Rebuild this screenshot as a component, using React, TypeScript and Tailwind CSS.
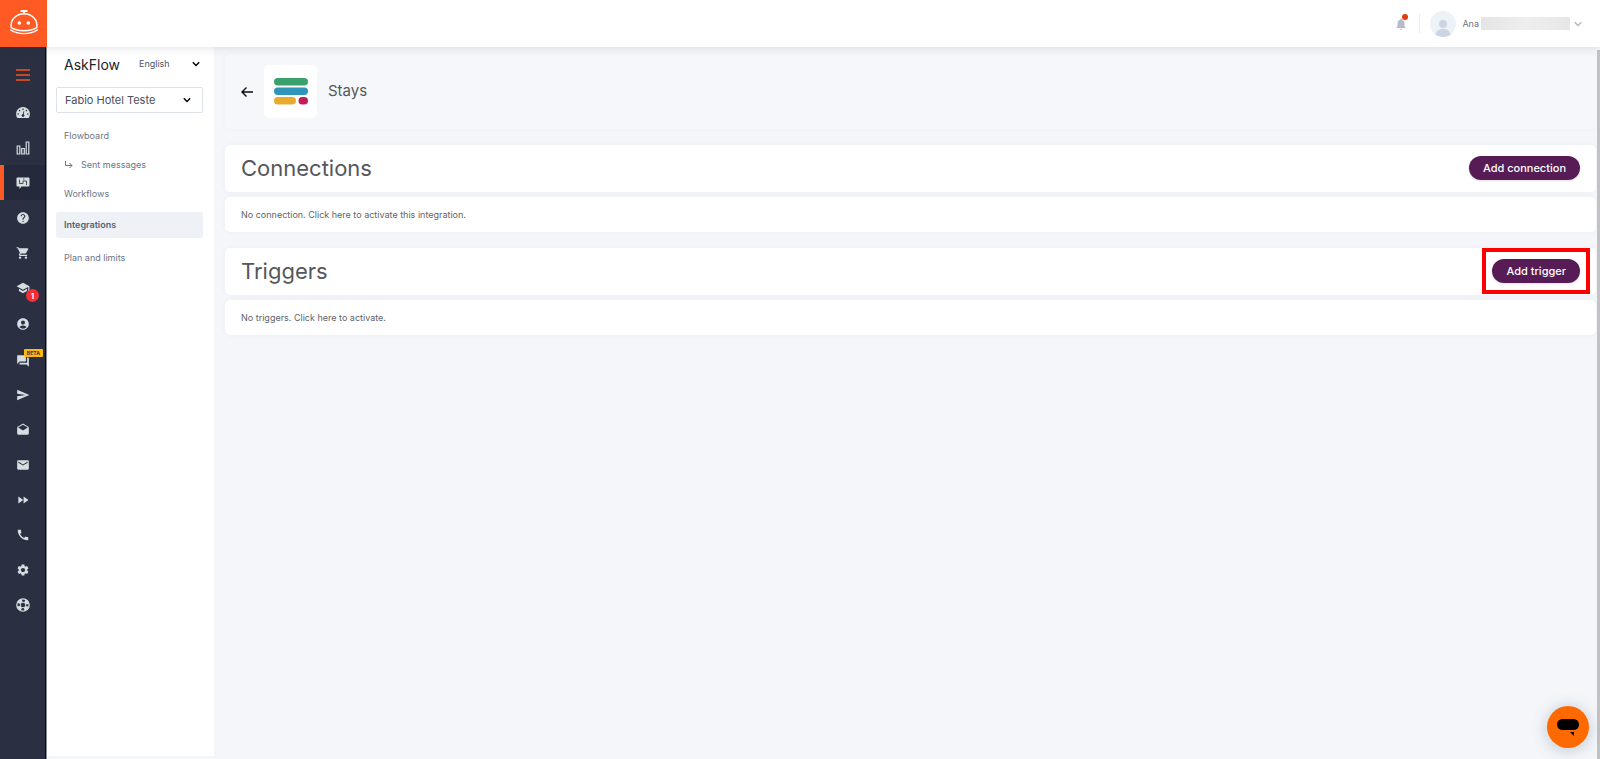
import type { ReactNode } from 'react'
import { clsx } from 'clsx'
import {
  MdAccountCircle,
  MdCall,
  MdDrafts,
  MdEmail,
  MdFastForward,
  MdForum,
  MdHelp,
  MdNotifications,
  MdSchool,
  MdSend,
  MdSettings,
  MdShoppingCart,
} from 'react-icons/md'

function LogoIcon() {
  return (
    <svg viewBox="0 0 30 28" className="h-7 w-[30px]" fill="none" stroke="white" strokeWidth="1.4" strokeLinecap="round">
      <path d="M12.3 2h5.400M15 2v2.500" strokeWidth="1.8" />
      <path d="M2.200 18.600C1 11 7 4.700 15 4.700S29 11 27.800 18.600C24 20.800 19.500 21.700 15 21.700S6 20.800 2.200 18.600Z" />
      <path d="M1.700 21c3.500 2.300 8.300 3.600 13.300 3.600S24.800 23.300 28.300 21" />
      <circle cx="10.300" cy="14" r="1.800" fill="white" stroke="none" />
      <circle cx="19.300" cy="14" r="1.800" fill="white" stroke="none" />
    </svg>
  )
}

function GaugeIcon() {
  return (
    <svg viewBox="0 0 14 11" className="h-[11px] w-3.5">
      <path d="M7 0a7 7 0 0 1 6 10.500q-.3.500-.8.500H1.800q-.5 0-.8-.500A7 7 0 0 1 7 0Z" fill="currentColor" />
      <g fill="#2b2f42">
        <circle cx="7" cy="2.200" r=".8" />
        <circle cx="3.600" cy="3.600" r=".8" />
        <circle cx="10.400" cy="3.600" r=".8" />
        <circle cx="2.200" cy="7" r=".8" />
        <circle cx="11.800" cy="7" r=".8" />
        <circle cx="7" cy="8.600" r="1.400" />
        <path d="m6.600 8.600 1-4.600.7.200-.7 4.600z" />
      </g>
    </svg>
  )
}

function BarsIcon() {
  return (
    <svg viewBox="0 0 14 14" className="size-3.5" fill="none" stroke="currentColor" strokeWidth="1.200">
      <path d="M1.200 5h2.600v8H1.200zM5.700 7.500h2.600V13H5.700zM10.200 1h2.600v12h-2.600z" />
    </svg>
  )
}

function FlowIcon() {
  return (
    <svg viewBox="0 0 14 12" className="h-3 w-3.5">
      <path d="M1.500.500h11q1 0 1 1v7q0 1-1 1H5.500L3.500 12V9.500h-2q-1 0-1-1v-7q0-1 1-1Z" fill="currentColor" />
      <path d="M3.500 2.500v4h3.500V4h3.500v4M7 2h1.500" stroke="#242a3b" strokeWidth=".8" fill="none" />
    </svg>
  )
}

function LifeRingIcon() {
  return (
    <svg viewBox="0 0 14 14" className="size-3.5" fill="none" stroke="currentColor">
      <circle cx="7" cy="7" r="6.200" strokeWidth="1.300" />
      <circle cx="7" cy="7" r="2.800" strokeWidth="1" />
      <circle cx="7" cy="7" r="4.500" strokeWidth="3.200" strokeDasharray="4.200 2.868" strokeDashoffset="-1.434" />
    </svg>
  )
}

function Chevron({ className }: { className?: string }) {
  return (
    <svg viewBox="0 0 8 6" fill="none" stroke="currentColor" strokeWidth="1.400" className={clsx('h-1.5 w-2', className)}>
      <path d="m.8 1.200 3.200 3.200 3.200-3.200" />
    </svg>
  )
}

type RailItem = { label: string; icon: ReactNode; active?: boolean; badge?: string; beta?: boolean }

const railItems: RailItem[] = [
  { label: 'Dashboard', icon: <GaugeIcon /> },
  { label: 'Reports', icon: <BarsIcon /> },
  { label: 'AskFlow', icon: <FlowIcon />, active: true },
  { label: 'Help', icon: <MdHelp /> },
  { label: 'Orders', icon: <MdShoppingCart /> },
  { label: 'Academy', icon: <MdSchool />, badge: '1' },
  { label: 'Account', icon: <MdAccountCircle /> },
  { label: 'Chat', icon: <MdForum />, beta: true },
  { label: 'Campaigns', icon: <MdSend /> },
  { label: 'Inbox', icon: <MdDrafts /> },
  { label: 'Email', icon: <MdEmail /> },
  { label: 'Automation', icon: <MdFastForward /> },
  { label: 'Calls', icon: <MdCall /> },
  { label: 'Settings', icon: <MdSettings /> },
  { label: 'Support', icon: <LifeRingIcon /> },
]

function Rail() {
  return (
    <aside className="w-[47px] shrink-0 border-r border-[#8b8e98] bg-[#2b2f42]">
      <div className="h-full border-r border-[#050b24]">
        <button type="button" aria-label="Toggle menu" className="flex h-12 w-full items-center justify-center pt-2">
          <svg viewBox="0 0 14 12" className="h-3 w-3.5" stroke="#f9521f" strokeWidth="1.500">
            <path d="M0 1h14M0 6h14M0 11h14" />
          </svg>
        </button>
        <nav>
          {railItems.map(item => (
            <a
              key={item.label}
              href="#"
              aria-label={item.label}
              className={clsx(
                'relative flex items-center justify-center text-[14px] text-[#d5dfe1]',
                item.badge || item.beta ? 'h-9' : 'h-[35px]',
                item.beta && 'pt-1',
                item.active && 'bg-[#242a3b]'
              )}
            >
              {item.active && <span className="absolute inset-y-0 left-0 w-1 bg-[#ff5a24]" />}
              {item.icon}
              {item.badge && (
                <span className="absolute right-1.5 bottom-1 flex size-[13px] items-center justify-center rounded-full bg-[#fa2c31] text-[8px] font-bold text-white">
                  {item.badge}
                </span>
              )}
              {item.beta && (
                <span className="absolute top-2 right-0.5 flex h-2 w-[19px] items-center justify-center rounded-[1px] bg-[#fcbb0c] text-[5px] leading-none font-bold tracking-wide text-[#2b2f42]">
                  BETA
                </span>
              )}
            </a>
          ))}
        </nav>
      </div>
    </aside>
  )
}

function Sidebar() {
  return (
    <aside className="mb-[3px] w-[167px] shrink-0 bg-white pr-[11px] pl-[9px] text-[9px] text-[#6c7686]">
      <div className="mt-[5px] flex h-6 items-center pl-2">
        <h1 className="text-[14px] text-[#1c2130]">AskFlow</h1>
        <div className="relative ml-auto flex w-16 items-center">
          <select
            aria-label="Language"
            defaultValue="en"
            className="h-5 w-full appearance-none bg-transparent text-[#4f5663] outline-none"
          >
            <option value="en">English</option>
          </select>
          <Chevron className="pointer-events-none absolute right-[3px] text-black" />
        </div>
      </div>
      <div className="relative mt-[11px] flex items-center">
        <select
          aria-label="Hotel"
          defaultValue="fabio"
          className="h-[26px] w-full appearance-none rounded-[2px] border border-[#dde2e8] bg-white px-2 text-[11px] text-[#4a4f59] outline-none"
        >
          <option value="fabio">Fabio Hotel Teste</option>
        </select>
        <Chevron className="pointer-events-none absolute right-3 text-black" />
      </div>
      <nav className="mt-2.5">
        <a href="#" className="flex h-[26px] items-center px-2">Flowboard</a>
        <a href="#" className="mt-[3px] flex h-[26px] items-center gap-2 px-2">
          <svg viewBox="0 0 9 8" className="h-2 w-[9px]" fill="none" stroke="currentColor" strokeWidth="1">
            <path d="M1.500 0v4.500H8M5.500 2 8 4.500 5.500 7" />
          </svg>
          Sent messages
        </a>
        <a href="#" className="mt-[3px] flex h-[26px] items-center px-2">Workflows</a>
        <a href="#" className="mt-[5px] flex h-[26px] items-center rounded-[2px] bg-[#eef2f7] px-2 font-semibold text-[#59616e]">
          Integrations
        </a>
        <a href="#" className="mt-[7px] flex h-[26px] items-center px-2">Plan and limits</a>
      </nav>
    </aside>
  )
}

function Section({ title, action, highlight, children }: {
  title: string
  action: string
  highlight?: boolean
  children: ReactNode
}) {
  return (
    <section className="mt-4">
      <div className="flex h-[47px] items-center justify-between rounded-[5px] bg-white px-4 pb-px shadow-[0_0_6px_rgba(60,80,110,0.04)]">
        <h2 className="text-[22px] text-[#55575b]">{title}</h2>
        <div className="relative">
          <button type="button" className="flex h-6 items-center rounded-full bg-[#571c55] px-3.5 text-[11px] font-medium text-white shadow-sm">
            {action}
          </button>
          {highlight && <span className="pointer-events-none absolute -inset-x-2.5 -inset-y-[11px] border-4 border-[#fd0000]" />}
        </div>
      </div>
      <p className="mt-[5px] flex h-[35px] items-center rounded-[5px] bg-white px-4 text-[9px] text-[#5f6368] shadow-[0_0_6px_rgba(60,80,110,0.04)]">
        {children}
      </p>
    </section>
  )
}

export default function App() {
  return (
    <div className="flex min-h-screen flex-col bg-[#f4f6fa] font-['Inter',sans-serif]">
      <header className="relative z-10 flex h-[47px] items-center bg-white shadow-[0_1px_8px_rgba(50,60,80,0.14)]">
        <a href="#" aria-label="Home" className="flex size-[47px] items-center justify-center bg-[#ff5a24] pb-0.5">
          <LogoIcon />
        </a>
        <div className="ml-auto flex items-center pr-[18px]">
          <button type="button" aria-label="Notifications" className="relative mr-[11px] text-[#b9bac9]">
            <MdNotifications className="size-3.5" />
            <span className="absolute -top-[3px] right-0 size-1.5 rounded-full bg-[#e23a0e]" />
          </button>
          <span className="h-[19px] w-px bg-[#ebecf2]" />
          <button type="button" className="ml-2.5 flex items-center text-[9px] text-[#6f7178]">
            <svg viewBox="0 0 26 26" className="size-[26px]">
              <clipPath id="avatar">
                <circle cx="13" cy="13" r="13" />
              </clipPath>
              <g clipPath="url(#avatar)">
                <path d="M0 0h26v26H0z" fill="#edf2f6" />
                <circle cx="13" cy="13" r="4" fill="#cbd5e3" />
                <path d="M5 27c0-6 3-9 8-9s8 3 8 9z" fill="#cbd5e3" />
              </g>
            </svg>
            <span className="ml-1.5">Ana</span>
            <span className="ml-0.5 h-[13px] w-[89px] bg-linear-to-r from-[#e5e5e5] via-[#eeeeee] to-[#e7e7e7]" />
            <Chevron className="ml-1 text-[#b3b5c3]" />
          </button>
        </div>
      </header>

      <div className="flex flex-1">
        <Rail />
        <Sidebar />
        <main className="min-w-0 flex-1 pt-[7px] pr-px pl-[11px]">
          <div className="flex h-[75px] items-center rounded-[5px] bg-[#f5f7fb] pl-4 shadow-[0_0_6px_rgba(60,80,110,0.03)]">
            <button type="button" aria-label="Back">
              <svg viewBox="0 0 12 10" className="h-2.5 w-3" fill="none" stroke="#080c14" strokeWidth="1.400">
                <path d="M12 5H1M5.500.500 1 5l4.500 4.500" />
              </svg>
            </button>
            <div className="ml-[11px] flex size-[53px] items-center justify-center rounded-[5px] bg-white">
              <svg viewBox="0 0 34 27" className="h-[27px] w-[34px]">
                <rect width="34" height="7.500" rx="3.750" fill="#3aa06c" />
                <rect y="9.500" width="34" height="7.500" rx="3.750" fill="#2f96b9" />
                <rect y="19" width="22" height="7.500" rx="3.750" fill="#e9ab2e" />
                <rect x="24.500" y="19" width="9.500" height="7.500" rx="3.750" fill="#c01f59" />
              </svg>
            </div>
            <span className="ml-[11px] text-[15px] text-[#55575b]">Stays</span>
          </div>
          <Section title="Connections" action="Add connection">
            No connection. Click here to activate this integration.
          </Section>
          <Section title="Triggers" action="Add trigger" highlight>
            No triggers. Click here to activate.
          </Section>
        </main>
        <div className="mt-[3px] w-[3px] shrink-0 bg-[#c2c2c4]" />
      </div>

      <button
        type="button"
        aria-label="Open chat"
        className="fixed right-[11px] bottom-[11px] flex size-[42px] items-center justify-center rounded-full bg-[#ff6900] shadow-[0_2px_16px_rgba(60,90,100,0.3)]"
      >
        <svg viewBox="0 0 22 18" className="h-[18px] w-[22px]">
          <rect y="1" width="22" height="11" rx="5.500" />
          <path d="M13 14h4v4z" />
        </svg>
      </button>
    </div>
  )
}
